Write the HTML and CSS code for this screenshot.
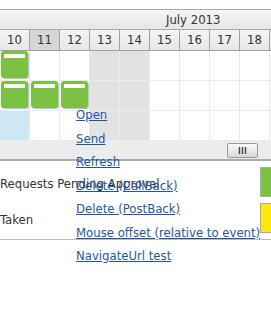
FILE: index.html
```html
<!DOCTYPE html>
<html lang="en">
	<head>
		<meta charset="UTF-8" />
		<title>Scheduler</title>
		<link rel="stylesheet" href="styles.css">
	</head>
	<body>
		<div class="scheduler">
			<div class="month">July 2013</div>
			<div class="days">
				<div class="day">10</div>
				<div class="day today">11</div>
				<div class="day">12</div>
				<div class="day">13</div>
				<div class="day">14</div>
				<div class="day">15</div>
				<div class="day">16</div>
				<div class="day">17</div>
				<div class="day">18</div>
				<div class="day">19</div>
			</div>
			<div class="row">
				<div class="cell"><div class="event"><div class="bar"></div></div></div>
				<div class="cell"></div>
				<div class="cell"></div>
				<div class="cell weekend"></div>
				<div class="cell weekend"></div>
				<div class="cell"></div>
				<div class="cell"></div>
				<div class="cell"></div>
				<div class="cell"></div>
				<div class="cell"></div>
			</div>
			<div class="row">
				<div class="cell"><div class="event"><div class="bar"></div></div></div>
				<div class="cell"><div class="event"><div class="bar"></div></div></div>
				<div class="cell"><div class="event"><div class="bar"></div></div></div>
				<div class="cell weekend"></div>
				<div class="cell weekend"></div>
				<div class="cell"></div>
				<div class="cell"></div>
				<div class="cell"></div>
				<div class="cell"></div>
				<div class="cell"></div>
			</div>
			<div class="row">
				<div class="cell selected"></div>
				<div class="cell"></div>
				<div class="cell"></div>
				<div class="cell weekend"></div>
				<div class="cell weekend"></div>
				<div class="cell"></div>
				<div class="cell"></div>
				<div class="cell"></div>
				<div class="cell"></div>
				<div class="cell"></div>
			</div>
			<div class="scroll">
				<div class="thumb">
					<svg width="9" height="7" viewBox="0 0 9 7">
						<path d="M1.5 0v7M4.5 0v7M7.5 0v7" stroke="#444" stroke-width="1.4" />
					</svg>
				</div>
			</div>
		</div>

		<div class="legend">
			<div class="legend-row">
				<div class="label">Requests Pending Approval</div>
				<div class="box green"></div>
			</div>
			<div class="legend-row">
				<div class="label">Taken</div>
				<div class="box yellow"></div>
			</div>
		</div>

		<ul class="menu">
			<li><a href="#">Open</a></li>
			<li><a href="#">Send</a></li>
			<li><a href="#">Refresh</a></li>
			<li><a href="#">Delete (CallBack)</a></li>
			<li><a href="#">Delete (PostBack)</a></li>
			<li><a href="#">Mouse offset (relative to event)</a></li>
			<li><a href="#">NavigateUrl test</a></li>
		</ul>
	</body>
</html>
```

FILE: styles.css
```css
* {
	margin: 0;
	padding: 0;
	list-style: none;
	box-sizing: border-box;
}

html,
body {
	height: 100%;
}

body {
	position: relative;
	font-family: "DejaVu Sans Condensed", "DejaVu Sans", sans-serif;
	font-stretch: condensed;
	font-size: 13px;
	color: #333;
	background: #fff;
}

.scheduler {
	margin-top: 9px;
	border-top: 1px solid #a8a8a8;
	overflow: hidden;
}

.month {
	height: 20px;
	padding-left: 166px;
	line-height: 19px;
	background: linear-gradient(#f5f5f5, #e6e6e6);
	border-bottom: 1px solid #a8a8a8;
	white-space: nowrap;
}

.days {
	display: flex;
	height: 21px;
	border-bottom: 1px solid #a0a0a0;
}

.day {
	flex: 0 0 30px;
	line-height: 20px;
	text-align: center;
	background: linear-gradient(#f5f5f5, #e7e7e7);
	border-right: 1px solid #a0a0a0;
}

.day.today {
	background: #d6d6d6;
}

.row {
	display: flex;
	height: 30px;
}

.cell {
	flex: 0 0 30px;
	border-right: 1px solid #eaeaea;
	border-bottom: 1px solid #eaeaea;
	background: #fff;
}

.cell.weekend {
	background: #e2e2e2;
	border-color: #ececec;
}

.cell.selected {
	background: #cde7f5;
}

/* eventos */
.event {
	width: 27px;
	height: 27px;
	margin-left: 1px;
	padding: 3px;
	background: #7cc242;
	border-radius: 3px;
	box-shadow: 1px 1px 1px rgba(80, 110, 140, 0.45);
}

.bar {
	width: 21px;
	height: 4px;
	background: #fff;
}

.scroll {
	height: 20px;
	padding: 2px 0 0 227px;
	background: #ececec;
	border-bottom: 2px solid #acacac;
}

.thumb {
	display: flex;
	align-items: center;
	justify-content: center;
	width: 31px;
	height: 15px;
	border: 1px solid #9a9a9a;
	border-radius: 2px;
	background: linear-gradient(#fafafa, #d8d8d8);
}

.legend {
	padding: 3px 0;
	border-bottom: 1px solid #bbb;
	overflow: hidden;
}

.legend-row {
	display: flex;
	align-items: center;
	height: 36px;
}

.label {
	flex: 0 0 260px;
	padding-top: 3px;
	white-space: nowrap;
}

.box {
	flex: 0 0 30px;
	height: 30px;
	border: 1px solid #aaa;
}

.green {
	background: #7cc242;
}

.yellow {
	background: #ffe70a;
}

/* menu contextual */
.menu {
	position: absolute;
	left: 76px;
	top: 103px;
}

.menu li {
	line-height: 23.5px;
	white-space: nowrap;
}

.menu a {
	color: #1d56a8;
}
```
